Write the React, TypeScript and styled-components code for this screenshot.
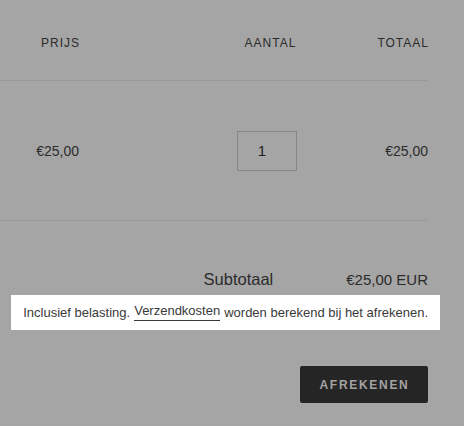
import React from 'react';
import styled, { createGlobalStyle } from 'styled-components';

const GlobalStyle = createGlobalStyle`
  html, body {
    margin: 0;
    padding: 0;
    background: #a5a5a5;
  }
  body {
    font-family: 'Liberation Sans', Arial, sans-serif;
    color: #2b2b2b;
  }
`;

const Page = styled.div`
  width: 464px;
  height: 426px;
  overflow: hidden;
  box-sizing: border-box;
  padding: 0 36px 0 0;
`;

const Table = styled.div`
  display: grid;
  grid-template-columns: 79px 1fr 60px 131px;
`;

const Row = styled.div`
  display: contents;
`;

const Cell = styled.div<{ $align: 'left' | 'center' | 'right'; $height: number }>`
  display: flex;
  align-items: center;
  justify-content: ${(p) =>
    p.$align === 'right' ? 'flex-end' : p.$align === 'center' ? 'center' : 'flex-start'};
  height: ${(p) => p.$height}px;
  box-sizing: border-box;
  border-bottom: 1px solid #999999;
`;

const HeadLabel = styled.span<{ $shift?: number }>`
  font-size: 12px;
  letter-spacing: 1px;
  margin-right: -1px;
  padding-top: 6px;
  padding-left: ${(p) => p.$shift || 0}px;
  text-transform: uppercase;
  color: #2b2b2b;
`;

const Price = styled.span`
  font-size: 14px;
  color: #2b2b2b;
`;

const QtyInput = styled.div`
  width: 60px;
  height: 40px;
  box-sizing: border-box;
  border: 1px solid #868686;
  display: flex;
  align-items: center;
  justify-content: center;
  font-size: 15px;
  color: #1e1e1e;
  padding-right: 10px;
`;

const Footer = styled.div`
  display: flex;
  flex-direction: column;
  align-items: flex-end;
  padding-top: 46px;
`;

const SubtotalLine = styled.div`
  display: flex;
  align-items: baseline;
  gap: 73px;
  line-height: 24px;
`;

const SubtotalLabel = styled.span`
  font-size: 16.5px;
  color: #2b2b2b;
`;

const SubtotalValue = styled.span`
  font-size: 15px;
  color: #2b2b2b;
`;

const Note = styled.p`
  margin: 3px -12px 0 0;
  padding: 0 12px 1px;
  width: 429px;
  height: 35px;
  box-sizing: border-box;
  background: #ffffff;
  display: flex;
  align-items: center;
  justify-content: flex-end;
  font-size: 13px;
  color: #3a3a3a;
  white-space: nowrap;
`;

const NoteLink = styled.a`
  color: #3a3a3a;
  text-decoration: none;
  border-bottom: 1px solid #3a3a3a;
  padding-bottom: 2px;
  margin: 0 4px;
`;

const CheckoutButton = styled.button`
  margin-top: 36px;
  width: 128px;
  height: 37px;
  border: none;
  border-radius: 2px;
  background: #252525;
  color: #a3a3a3;
  font-family: 'Liberation Sans', Arial, sans-serif;
  font-weight: 700;
  font-size: 12px;
  letter-spacing: 1.7px;
  padding: 0 0 0 1px;
`;

export default function App() {
  return (
    <>
      <GlobalStyle />
      <Page>
        <Table>
          <Row>
            <Cell $align="right" $height={81}>
              <HeadLabel>Prijs</HeadLabel>
            </Cell>
            <Cell $align="left" $height={81} />
            <Cell $align="center" $height={81}>
              <HeadLabel $shift={6}>Aantal</HeadLabel>
            </Cell>
            <Cell $align="right" $height={81}>
              <HeadLabel>Totaal</HeadLabel>
            </Cell>
          </Row>
          <Row>
            <Cell $align="right" $height={140}>
              <Price>€25,00</Price>
            </Cell>
            <Cell $align="left" $height={140} />
            <Cell $align="center" $height={140}>
              <QtyInput>1</QtyInput>
            </Cell>
            <Cell $align="right" $height={140}>
              <Price>€25,00</Price>
            </Cell>
          </Row>
        </Table>
        <Footer>
          <SubtotalLine>
            <SubtotalLabel>Subtotaal</SubtotalLabel>
            <SubtotalValue>€25,00 EUR</SubtotalValue>
          </SubtotalLine>
          <Note>
            Inclusief belasting.<NoteLink href="#">Verzendkosten</NoteLink>worden berekend bij het afrekenen.
          </Note>
          <CheckoutButton>AFREKENEN</CheckoutButton>
        </Footer>
      </Page>
    </>
  );
}
